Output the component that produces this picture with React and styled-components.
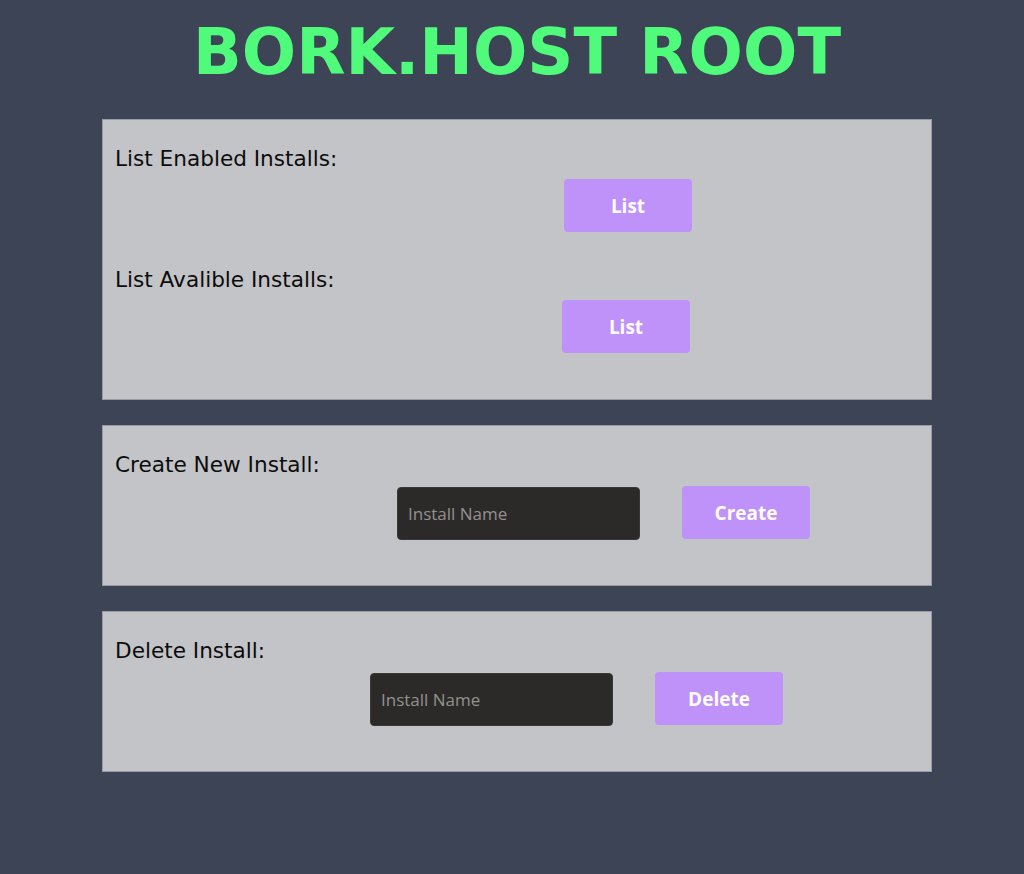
import React from 'react';
import styled, { createGlobalStyle } from 'styled-components';

const GlobalStyle = createGlobalStyle`
  html, body {
    margin: 0;
    padding: 0;
    background: #3c4456;
  }
  body {
    font-family: "DejaVu Sans", sans-serif;
  }
`

const Page = styled.div`
  min-height: 874px;
  box-sizing: border-box;
  padding: 15px 0 40px 10px;
  display: flex;
  flex-direction: column;
  align-items: center;
`

const Title = styled.h1`
  margin: 0 0 30px;
  font-family: "DejaVu Sans", sans-serif;
  font-weight: bold;
  font-size: 64px;
  line-height: normal;
  color: #50fa7b;
`

const Panel = styled.section`
  width: 830px;
  box-sizing: border-box;
  background: #c3c4c8;
  border: 1px solid #9a9ca3;
  padding: 26px 12px ${p => p.$bottom}px;
  margin-bottom: 25px;
`

const Label = styled.div`
  font-family: "DejaVu Sans", sans-serif;
  font-size: 21.6px;
  line-height: normal;
  color: #0c0c0c;
  margin-top: ${p => p.$top || 0}px;
`

const ControlRow = styled.div`
  display: flex;
  align-items: flex-start;
  gap: 42px;
  margin-top: ${p => p.$top}px;
  padding-left: ${p => p.$indent}px;
`

const Button = styled.button`
  width: 128px;
  height: 53px;
  border: none;
  border-radius: 4px;
  background: #bf92fa;
  color: #ffffff;
  font-family: "Open Sans", sans-serif;
  font-weight: bold;
  font-size: 19px;
  cursor: pointer;
  padding: 0;
`

const Input = styled.input`
  width: 243px;
  height: 53px;
  box-sizing: border-box;
  margin-top: 1px;
  border: 1px solid #3a3837;
  border-radius: 4px;
  background: #2b2a29;
  color: #e0e0e0;
  padding: 0 10px;
  font-family: "Open Sans", sans-serif;
  font-size: 17px;
  outline: none;

  &::placeholder {
    color: #94918e;
  }
`

export default function App() {
  return (
    <>
      <GlobalStyle />
      <Page>
        <Title>BORK.HOST ROOT</Title>

        <Panel $bottom={46}>
          <Label>List Enabled Installs:</Label>
          <ControlRow $top={8} $indent={449}>
            <Button>List</Button>
          </ControlRow>
          <Label $top={35}>List Avalible Installs:</Label>
          <ControlRow $top={8} $indent={447}>
            <Button>List</Button>
          </ControlRow>
        </Panel>

        <Panel $bottom={45}>
          <Label>Create New Install:</Label>
          <ControlRow $top={9} $indent={282}>
            <Input placeholder="Install Name" />
            <Button>Create</Button>
          </ControlRow>
        </Panel>

        <Panel $bottom={45}>
          <Label>Delete Install:</Label>
          <ControlRow $top={9} $indent={255}>
            <Input placeholder="Install Name" />
            <Button>Delete</Button>
          </ControlRow>
        </Panel>
      </Page>
    </>
  );
}
